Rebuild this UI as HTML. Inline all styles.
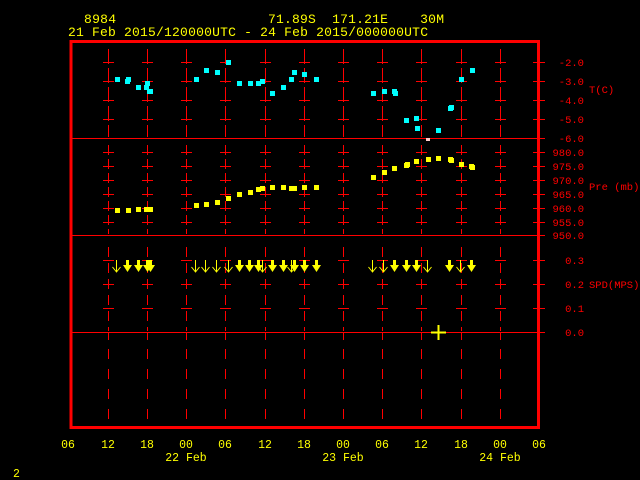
<!DOCTYPE html>
<html><head><meta charset="utf-8"><style>
html,body{margin:0;padding:0;background:#000;width:640px;height:480px;overflow:hidden}
svg{position:absolute;left:0;top:0}
text{font-family:"Liberation Mono","DejaVu Sans Mono",monospace}
.y{fill:#ff0;font-size:13px}
.r{fill:#f00;font-size:10.5px}
.b{fill:#ff0;font-size:11.5px}
line,rect,polyline{shape-rendering:crispEdges}
</style></head><body>
<svg id="s" width="640" height="480" xmlns="http://www.w3.org/2000/svg">
<text class="y" x="84" y="23" textLength="32">8984</text>
<text class="y" x="268" y="23" textLength="176" xml:space="preserve">71.89S  171.21E    30M</text>
<text class="y" x="68" y="36" textLength="360">21 Feb 2015/120000UTC - 24 Feb 2015/000000UTC</text>
<g class="r" text-anchor="end">
<text x="584" y="66">-2.0</text><text x="584" y="85">-3.0</text><text x="584" y="104">-4.0</text><text x="584" y="123">-5.0</text><text x="584" y="142">-6.0</text>
<text x="584" y="156">980.0</text><text x="584" y="170">975.0</text><text x="584" y="184">970.0</text><text x="584" y="198">965.0</text><text x="584" y="212">960.0</text><text x="584" y="226">955.0</text><text x="584" y="239">950.0</text>
<text x="584" y="264">0.3</text><text x="584" y="288">0.2</text><text x="584" y="312">0.1</text><text x="584" y="336">0.0</text>
</g>
<g class="r"><text x="589" y="93">T(C)</text><text x="589" y="190">Pre (mb)</text><text x="589" y="288">SPD(MPS)</text></g>
<g class="b" text-anchor="middle">
<text x="68" y="448">06</text><text x="108" y="448">12</text><text x="147" y="448">18</text><text x="186" y="448">00</text><text x="225" y="448">06</text><text x="265" y="448">12</text><text x="304" y="448">18</text><text x="343" y="448">00</text><text x="382" y="448">06</text><text x="421" y="448">12</text><text x="461" y="448">18</text><text x="500" y="448">00</text><text x="539" y="448">06</text>
<text x="186" y="461">22 Feb</text><text x="343" y="461">23 Feb</text><text x="500" y="461">24 Feb</text>
</g>
<text class="b" x="13" y="477">2</text>
<g id="g"></g>
</svg>
<script>
var g=document.getElementById("g"),h="";
function L(x1,y1,x2,y2,c,w,extra){h+='<line x1="'+x1+'" y1="'+y1+'" x2="'+x2+'" y2="'+y2+'" stroke="'+c+'" stroke-width="'+w+'" '+(extra||'')+'/>';}
var xs=[108,147,186,225,265,304,343,382,421,461,500];
var ty=[62,81,100,119,152,166,180,194,208,222,260,284,308];
xs.forEach(function(x0){var x=x0+.5;
 L(x,49,x,137,"#f00",1,'stroke-dasharray="15,4"');
 L(x,145,x,234,"#f00",1,'stroke-dasharray="10,4"');
 L(x,247,x,331,"#f00",1,'stroke-dasharray="10,6"');
 L(x,333,x,340,"#f00",1);
 [349,369,389,409].forEach(function(y){L(x,y,x,y+10,"#f00",1);});
 ty.forEach(function(y){L(x0-5,y+.5,x0+6,y+.5,"#f00",1);});
});
ty.forEach(function(y){L(533,y+.5,545,y+.5,"#f00",1);});
L(71,138.5,545,138.5,"#f00",1);
L(71,235.5,545,235.5,"#f00",1);
L(71,332.5,545,332.5,"#f00",1);
h+='<rect x="71" y="41.5" width="467.5" height="386" fill="none" stroke="#f00" stroke-width="3"/>';
var cy=[[117,79],[128,79],[127,81],[138,87],[146,87],[147,83],[150,91],[149,91],[196,79],[206,70],[217,72],[228,62],[239,83],[250,83],[258,83],[262,81],[272,93],[283,87],[291,79],[294,72],[304,74],[316,79],[373,93],[384,91],[394,91],[395,93],[406,120],[416,118],[417,128],[438,130],[450,108],[451,107],[461,79],[472,70]];
cy.forEach(function(p){h+='<rect x="'+(p[0]-2)+'" y="'+(p[1]-2)+'" width="5" height="5" fill="#0ff"/>';});
h+='<rect x="426" y="138" width="4" height="3" fill="#fcc"/>';
var yp=[[117,210],[128,210],[138,209],[146,209],[150,209],[196,205],[206,204],[217,202],[228,198],[239,194],[250,192],[258,189],[262,188],[272,187],[283,187],[291,188],[294,188],[304,187],[316,187],[373,177],[384,172],[394,168],[406,165],[407,164],[416,161],[428,159],[438,158],[450,159],[451,160],[461,164],[471,166],[472,167]];
yp.forEach(function(p){h+='<rect x="'+(p[0]-2)+'" y="'+(p[1]-2)+'" width="5" height="5" fill="#ff0"/>';});
var ar=[[116,0],[127,1],[138,1],[147,1],[150,1],[195,0],[205,0],[216,0],[228,0],[239,1],[249,1],[258,1],[262,0],[272,1],[283,1],[291,0],[294,1],[304,1],[316,1],[372,0],[383,0],[394,1],[406,1],[416,1],[427,0],[449,1],[460,0],[471,1]];
ar.forEach(function(a){var x=a[0];
 if(a[1]){L(x+.5,260,x+.5,269,"#ff0",3);h+='<polygon points="'+(x-4)+',265 '+(x+5)+',265 '+(x+.5)+',272" fill="#ff0"/>';}
 else{L(x+.5,260,x+.5,272,"#ff0",1);h+='<polyline points="'+(x-3.5)+',267 '+(x+.5)+',272 '+(x+4.5)+',267" fill="none" stroke="#ff0" stroke-width="1" style="shape-rendering:auto"/>';}
});
L(431,332.5,446,332.5,"#ff0",2);L(438.5,325,438.5,340,"#ff0",2);
g.innerHTML=h;
</script>
</body></html>
